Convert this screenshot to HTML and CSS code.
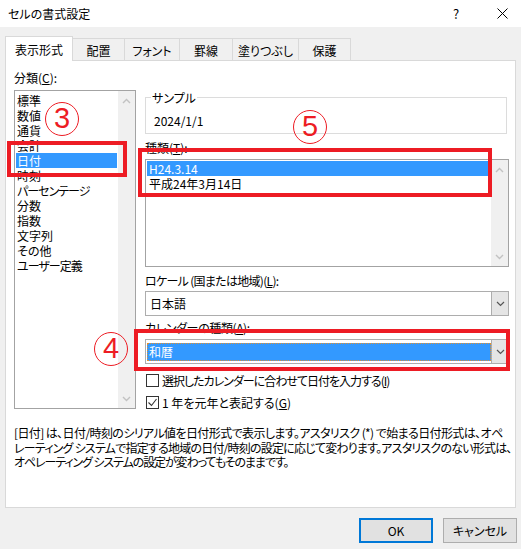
FILE: index.html
```html
<!DOCTYPE html>
<html lang="ja">
<head>
<meta charset="utf-8">
<title>セルの書式設定</title>
<link rel="stylesheet" href="styles.css">
</head>
<body>
<div class="dialog">
  <header class="titlebar">
    <span class="title">セルの書式設定</span>
    <span class="help">?</span>
    <svg class="close" width="11" height="11" viewBox="0 0 11 11"><path d="M0.5 0.5 L10.5 10.5 M10.5 0.5 L0.5 10.5" stroke="#000" stroke-width="1" fill="none"/></svg>
  </header>

  <nav class="tabs">
    <div class="tab active">表示形式</div>
    <div class="tab">配置</div>
    <div class="tab">フォント</div>
    <div class="tab">罫線</div>
    <div class="tab">塗りつぶし</div>
    <div class="tab">保護</div>
  </nav>

  <section class="panel">
    <div class="panel-top">
      <div class="col-left">
        <div class="label cat-label">分類(<u>C</u>):</div>
        <div class="listbox cat">
          <ul class="items">
            <li>標準</li>
            <li>数値</li>
            <li>通貨</li>
            <li>会計</li>
            <li class="sel">日付</li>
            <li>時刻</li>
            <li class="kana">パーセンテージ</li>
            <li>分数</li>
            <li>指数</li>
            <li>文字列</li>
            <li>その他</li>
            <li class="kana">ユーザー定義</li>
          </ul>
          <div class="vscroll">
            <svg width="9" height="6" viewBox="0 0 9 6"><polyline points="1,5 4.5,1.5 8,5" fill="none" stroke="#c2c2c2" stroke-width="1.4"/></svg>
            <svg width="9" height="6" viewBox="0 0 9 6"><polyline points="1,1 4.5,4.5 8,1" fill="none" stroke="#c2c2c2" stroke-width="1.4"/></svg>
          </div>
        </div>
      </div>

      <div class="col-right">
        <div class="group">
          <span class="legend">サンプル</span>
          <div class="sample">2024/1/1</div>
        </div>

        <div class="label type-label">種類(<u>T</u>):</div>
        <div class="listbox types">
          <ul class="items">
            <li class="sel">H24.3.14</li>
            <li>平成24年3月14日</li>
          </ul>
          <div class="vscroll">
            <svg width="9" height="6" viewBox="0 0 9 6"><polyline points="1,5 4.5,1.5 8,5" fill="none" stroke="#c2c2c2" stroke-width="1.4"/></svg>
            <svg width="9" height="6" viewBox="0 0 9 6"><polyline points="1,1 4.5,4.5 8,1" fill="none" stroke="#c2c2c2" stroke-width="1.4"/></svg>
          </div>
        </div>

        <div class="label locale-label">ロケール (国または地域)(<u>L</u>):</div>
        <div class="combo">
          <div class="combo-text">日本語</div>
          <div class="combo-btn"><svg width="9" height="6" viewBox="0 0 9 6"><polyline points="1,1 4.5,4.5 8,1" fill="none" stroke="#555" stroke-width="1.2"/></svg></div>
        </div>

        <div class="label cal-label">カレンダーの種類(<u>A</u>):</div>
        <div class="combo cal">
          <div class="combo-text focused">和暦</div>
          <div class="combo-btn"><svg width="9" height="6" viewBox="0 0 9 6"><polyline points="1,1 4.5,4.5 8,1" fill="none" stroke="#555" stroke-width="1.2"/></svg></div>
        </div>

        <div class="check check-first">
          <span class="box"></span>
          <span class="check-text">選択したカレンダーに合わせて日付を入力する(<u>I</u>)</span>
        </div>
        <div class="check check-second">
          <span class="box"><svg width="11" height="11" viewBox="0 0 11 11"><polyline points="1.5,5.5 4.5,8.5 9.5,2" fill="none" stroke="#333" stroke-width="1.1"/></svg></span>
          <span>1 年を元年と表記する(<u>G</u>)</span>
        </div>
      </div>
    </div>

    <p class="desc"><span class="line l1">[日付] は、日付/時刻のシリアル値を日付形式で表示します。アスタリスク (*) で始まる日付形式は、オペ</span><span class="line l2">レーティング システムで指定する地域の日付/時刻の設定に応じて変わります。アスタリスクのない形式は、</span><span class="line l3">オペレーティング システムの設定が変わってもそのままです。</span></p>
  </section>

  <footer class="buttons">
    <button class="btn default">OK</button>
    <button class="btn">キャンセル</button>
  </footer>

  <div class="hl hl-cat"></div>
  <div class="hl hl-type"></div>
  <div class="hl hl-cal"></div>
  <div class="mark mark-3">3</div>
  <div class="mark mark-5">5</div>
  <div class="mark mark-4">4</div>
</div>
</body>
</html>
```

FILE: styles.css
```css
* { box-sizing: border-box; }
html, body { margin: 0; padding: 0; }
body {
  width: 521px;
  height: 549px;
  overflow: hidden;
  background: #f0f0f0;
  color: #000;
  font-family: "Noto Sans CJK JP", "Noto Sans", sans-serif;
  font-size: 12px;
  font-feature-settings: "palt";
}
u { text-decoration: underline; text-underline-offset: 1px; }

.dialog { position: relative; width: 521px; height: 549px; }

/* title bar */
.titlebar {
  height: 27px;
  background: #fff;
  display: flex;
  align-items: center;
  padding-left: 8px;
  line-height: 15px;
}
.title { flex: 1; }
.help { width: 16px; text-align: center; margin-right: 33px; font-size: 13px; }
.close { margin-right: 13px; }

/* tabs */
.tabs {
  height: 33px;
  display: flex;
  align-items: flex-end;
  padding-left: 5px;
}
.tab {
  height: 22px;
  margin-left: -1px;
  border: 1px solid #d9d9d9;
  border-bottom: none;
  background: #f0f0f0;
  display: flex;
  align-items: center;
  justify-content: center;
  padding-top: 1px;
}
.tab:nth-child(1) { width: 68px; margin-left: 0; }
.tab:nth-child(2) { width: 53px; }
.tab:nth-child(3) { width: 56px; }
.tab:nth-child(4) { width: 54px; }
.tab:nth-child(5) { width: 67px; }
.tab:nth-child(6) { width: 53px; }
.tab.active {
  height: 25px;
  margin-bottom: -1px;
  background: #fff;
  position: relative;
  z-index: 2;
  padding-top: 0;
}

/* panel */
.panel {
  position: relative;
  margin-left: 5px;
  width: 511px;
  height: 448px;
  background: #fff;
  border: 1px solid #d9d9d9;
  padding: 9px 0 0 8px;
}
.panel-top { display: flex; gap: 9px; }
.col-left { width: 122px; }
.col-right { width: 364px; display: flex; flex-direction: column; }

.label { line-height: 15px; white-space: nowrap; }
.cat-label { margin-bottom: 5px; }
.type-label { margin-top: 6px; margin-bottom: 4px; }
.locale-label { margin-top: 6px; margin-bottom: 3px; letter-spacing: -0.7px; }
.cal-label { margin-top: 4px; margin-bottom: 4px; letter-spacing: -0.4px; }

/* list boxes */
.listbox {
  display: flex;
  border: 1px solid #a3a3a3;
  background: #fff;
}
.listbox.cat { height: 319px; }
.listbox.types { height: 108px; }
.items {
  flex: 1;
  list-style: none;
  margin: 0;
  padding: 2px 0 0 0;
}
.types .items { padding-top: 1px; }
.items li {
  line-height: 15px;
  height: 15px;
  padding-left: 2px;
  white-space: nowrap;
}
.items li.kana { letter-spacing: -1px; }
.items li.sel {
  background: #3399ff;
  color: #fff;
  margin: 0 1px;
  padding-left: 1px;
}
.types .items li.sel { padding-left: 2px; }
.types .items li { padding-left: 3px; }
.vscroll {
  width: 17px;
  background: #f0f0f0;
  display: flex;
  flex-direction: column;
  align-items: center;
  justify-content: space-between;
  padding: 7px 0 6px;
}
.vscroll svg { display: block; }

/* group box */
.group {
  margin-top: 27px;
  width: 362px;
  border: 1px solid #dcdcdc;
  padding: 0 0 5px 5px;
}
.legend {
  display: block;
  width: max-content;
  margin-top: -8px;
  padding: 0 1px;
  background: #fff;
  line-height: 15px;
}
.sample { margin-top: 8px; padding-left: 3px; line-height: 15px; }

/* combo boxes */
.combo {
  height: 25px;
  display: flex;
  border: 1px solid #adadad;
  background: #fff;
}
.combo-text {
  flex: 1;
  padding-left: 4px;
  line-height: 23px;
}
.combo-btn {
  width: 17px;
  background: #e5e5e5;
  border-left: 1px solid #adadad;
  display: flex;
  align-items: center;
  justify-content: center;
}
.combo-btn svg { display: block; }
.combo.cal .combo-text.focused {
  margin: 3px 0 2px 1px;
  padding-left: 1px;
  line-height: 15px;
  background: #3399ff;
  color: #fff;
  border: 1px dotted #e2902e;
}

/* checkboxes */
.check {
  display: flex;
  align-items: center;
  line-height: 15px;
  white-space: nowrap;
}
.check-first { margin-top: 9px; }
.check-second { margin-top: 7px; }
.check-text { letter-spacing: -1px; }
.box {
  width: 13px;
  height: 13px;
  margin-left: 1px;
  margin-right: 3px;
  border: 1px solid #333;
  background: #fff;
  display: flex;
  align-items: center;
  justify-content: center;
}
.box svg { display: block; }

/* description */
.desc {
  margin: 16px 0 0;
  line-height: 14.5px;
  white-space: nowrap;
}
.line { display: block; }
.l1 { letter-spacing: -0.6px; }
.l2 { letter-spacing: -0.78px; }
.l3 { letter-spacing: -1.1px; }

/* buttons */
.buttons {
  display: flex;
  justify-content: flex-end;
  gap: 10px;
  padding-right: 4px;
  margin-top: 10px;
}
.btn {
  width: 74px;
  height: 25px;
  background: #e1e1e1;
  border: 1px solid #adadad;
  font: inherit;
  color: #000;
  padding: 0;
  line-height: 15px;
}
.btn.default { border: 2px solid #0078d7; }

/* annotations */
.hl {
  position: absolute;
  border: 4px solid #ed1c24;
  z-index: 5;
}
.hl-cat { left: 7px; top: 141px; width: 120px; height: 36px; }
.hl-type { left: 138px; top: 148px; width: 354px; height: 49px; }
.hl-cal { left: 134px; top: 329px; width: 376px; height: 42px; }

.mark {
  position: absolute;
  z-index: 6;
  width: 34px;
  height: 34px;
  border: 1.5px solid #ed1c24;
  border-radius: 50%;
  color: #ed1c24;
  font-family: "Liberation Sans", sans-serif;
  font-size: 29px;
  line-height: 31px;
  text-align: center;
}
.mark-3 { left: 45px; top: 102px; }
.mark-5 { left: 293px; top: 110px; }
.mark-4 { left: 94px; top: 332px; }
```
